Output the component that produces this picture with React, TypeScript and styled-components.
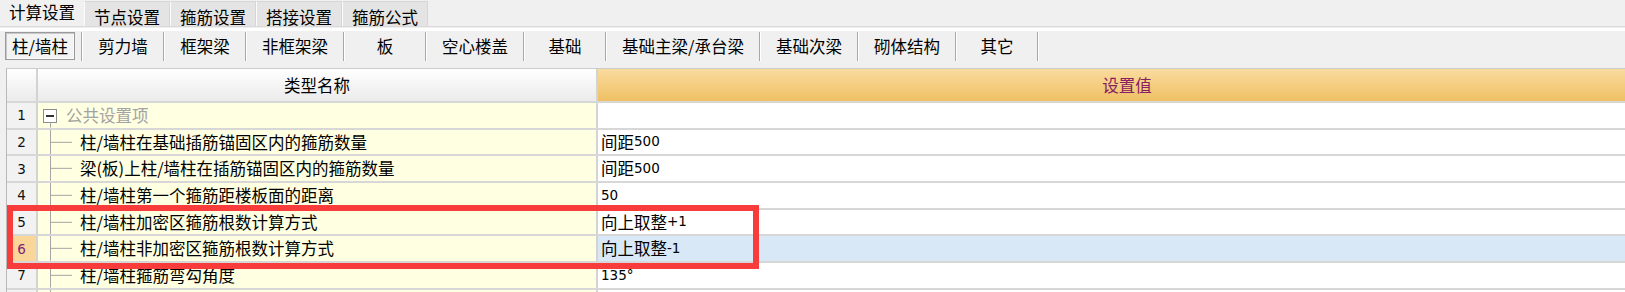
import React from 'react'
import styled, { createGlobalStyle } from 'styled-components'

const GlobalStyle = createGlobalStyle`
  html, body {
    margin: 0;
    padding: 0;
    background: #f0f0f0;
    overflow: hidden;
  }
  body {
    font-family: "Noto Sans CJK SC", sans-serif;
    color: #000;
  }
`

const CJK = `"Noto Sans CJK SC", sans-serif`
const LATIN = `"DejaVu Sans", "Noto Sans CJK SC", sans-serif`
const ROW_H = 26.667

const Page = styled.div`
  width: 1625px;
  height: 292px;
  overflow: hidden;
  background: #f0f0f0;
`

const TabStrip = styled.div`
  display: flex;
  align-items: flex-start;
  height: 26px;
  border-bottom: 1px solid #d9d9d9;
`

const TopTab = styled.div<{ $active?: boolean }>`
  box-sizing: border-box;
  display: flex;
  align-items: center;
  justify-content: center;
  font-family: ${CJK};
  font-size: 16.5px;
  line-height: 1;
  white-space: nowrap;
  padding: 0 9px;
  ${({ $active }) =>
    $active
      ? `
    height: 26px;
    padding-bottom: 1px;
    background: #f0f0f0;
  `
      : `
    height: 25px;
    margin-top: 1px;
    padding-top: 6px;
    background: #e4e4e4;
    border: 1px solid #d6d6d6;
    border-left-color: #fbfbfb;
    border-bottom: none;
  `}
`

const SubTabBar = styled.div`
  display: flex;
  align-items: stretch;
  margin-top: 1px;
  border-top: 3px solid #ffffff;
  padding-top: 1px;
  height: 29px;
`

const SubTab = styled.div<{ $active?: boolean }>`
  box-sizing: border-box;
  display: flex;
  align-items: center;
  justify-content: center;
  font-family: ${CJK};
  font-size: 16.5px;
  line-height: 1;
  white-space: nowrap;
  ${({ $active }) =>
    $active
      ? `
    margin: 0 6px 1px 5px;
    padding: 0 6px;
    border: 1px solid #9a9a9a;
    box-shadow: inset 1px 1px 0 #c9c9c9, inset -1px -1px 0 #fafafa;
    background: #f3f3f3;
  `
      : `
    min-width: 80px;
    padding: 0 15px;
  `}
`

const SubSep = styled.div`
  width: 1px;
  background: #a8a8a8;
  border-right: 1px solid #ffffff;
`

const TableWrap = styled.div`
  position: relative;
  margin: 7px 0 0 6px;
  width: 1649px;
  border-top: 1px solid #cbcbcb;
  border-left: 1px solid #b9b9b9;
`

const Row = styled.div<{ $header?: boolean }>`
  box-sizing: border-box;
  display: flex;
  height: ${({ $header }) => ($header ? '34px' : `${ROW_H}px`)};
  border-bottom: 2px solid #d7d7d7;
`

const NumCell = styled.div<{ $header?: boolean; $selected?: boolean }>`
  box-sizing: border-box;
  flex: 0 0 31px;
  display: flex;
  align-items: center;
  justify-content: center;
  border-right: 2px solid #d3d3d3;
  font-family: ${LATIN};
  font-size: 13.5px;
  color: ${({ $selected }) => ($selected ? '#7d237a' : '#111')};
  background: ${({ $header, $selected }) =>
    $header
      ? 'linear-gradient(#ffffff, #ebebeb)'
      : $selected
        ? '#fbd699'
        : '#f2f2f2'};
`

const NameCell = styled.div<{ $header?: boolean }>`
  box-sizing: border-box;
  flex: 0 0 560px;
  display: flex;
  align-items: center;
  justify-content: ${({ $header }) => ($header ? 'center' : 'flex-start')};
  border-right: 2px solid #d3d3d3;
  font-family: ${CJK};
  font-size: 16.5px;
  line-height: 1;
  white-space: nowrap;
  overflow: hidden;
  background: ${({ $header }) => ($header ? 'linear-gradient(#ffffff, #ebebeb)' : '#ffffe2')};
`

const NameText = styled.span<{ $muted?: boolean }>`
  color: ${({ $muted }) => ($muted ? '#a3a3a3' : '#000')};
`

const ValueCell = styled.div<{ $header?: boolean; $selected?: boolean }>`
  box-sizing: border-box;
  flex: 0 0 1058px;
  display: flex;
  align-items: center;
  justify-content: ${({ $header }) => ($header ? 'center' : 'flex-start')};
  padding-left: ${({ $header }) => ($header ? '0' : '3px')};
  font-family: ${CJK};
  font-size: 16.5px;
  line-height: 1;
  white-space: nowrap;
  color: ${({ $header }) => ($header ? '#862063' : '#000')};
  background: ${({ $header, $selected }) =>
    $header ? 'linear-gradient(#fadb9f, #efc063)' : $selected ? '#d9e8f6' : '#ffffff'};
`

const Latin = styled.span`
  font-family: ${LATIN};
  font-size: 13.5px;
`

const Gutter = styled.svg`
  flex: 0 0 auto;
  height: 100%;
  display: block;
`

const Highlight = styled.div`
  position: absolute;
  left: 0;
  top: 136px;
  width: 752px;
  height: 64px;
  box-sizing: border-box;
  border: 6px solid #f83c3c;
  pointer-events: none;
`

const LINE = '#a5a5a5'

const TreeRoot = () => (
  <Gutter width={28}>
    <rect x={5.5} y={6.5} width={13} height={13} fill="#ffffff" stroke="#8e8e8e" />
    <line x1={8} y1={13} x2={16} y2={13} stroke="#000" strokeWidth={1.6} />
    <line x1={12.5} y1={19.5} x2={12.5} y2="100%" stroke={LINE} />
  </Gutter>
)

const TreeLeaf = () => (
  <Gutter width={42}>
    <line x1={12.5} y1={0} x2={12.5} y2="100%" stroke={LINE} />
    <line x1={12.5} y1="50%" x2={34} y2="50%" stroke={LINE} />
  </Gutter>
)

// digits and signs come out in the smaller latin face
const mixed = (text: string) =>
  text
    .split(/([\u4e00-\u9fff]+)/)
    .filter(Boolean)
    .map((part, i) => (/[\u4e00-\u9fff]/.test(part) ? <span key={i}>{part}</span> : <Latin key={i}>{part}</Latin>))

const topTabs = ['计算设置', '节点设置', '箍筋设置', '搭接设置', '箍筋公式']
const subTabs = ['柱/墙柱', '剪力墙', '框架梁', '非框架梁', '板', '空心楼盖', '基础', '基础主梁/承台梁', '基础次梁', '砌体结构', '其它']

type Item = { name: string; value: string; root?: boolean; selected?: boolean }

const rows: Item[] = [
  { name: '公共设置项', value: '', root: true },
  { name: '柱/墙柱在基础插筋锚固区内的箍筋数量', value: '间距500' },
  { name: '梁(板)上柱/墙柱在插筋锚固区内的箍筋数量', value: '间距500' },
  { name: '柱/墙柱第一个箍筋距楼板面的距离', value: '50' },
  { name: '柱/墙柱加密区箍筋根数计算方式', value: '向上取整+1' },
  { name: '柱/墙柱非加密区箍筋根数计算方式', value: '向上取整-1', selected: true },
  { name: '柱/墙柱箍筋弯勾角度', value: '135°' },
]

export default function App() {
  return (
    <Page>
      <GlobalStyle />
      <TabStrip>
        {topTabs.map((t, i) => (
          <TopTab key={t} $active={i === 0}>
            {t}
          </TopTab>
        ))}
      </TabStrip>

      <SubTabBar>
        {subTabs.map((t, i) => (
          <React.Fragment key={t}>
            <SubTab $active={i === 0}>{t}</SubTab>
            <SubSep />
          </React.Fragment>
        ))}
      </SubTabBar>

      <TableWrap>
        <Row $header>
          <NumCell $header />
          <NameCell $header>类型名称</NameCell>
          <ValueCell $header>设置值</ValueCell>
        </Row>
        {rows.map((r, i) => (
          <Row key={i}>
            <NumCell $selected={r.selected}>{i + 1}</NumCell>
            <NameCell>
              {r.root ? <TreeRoot /> : <TreeLeaf />}
              <NameText $muted={r.root}>{r.name}</NameText>
            </NameCell>
            <ValueCell $selected={r.selected}>{mixed(r.value)}</ValueCell>
          </Row>
        ))}
        {/* next row, only its top edge is in view */}
        <Row>
          <NumCell />
          <NameCell>
            <TreeLeaf />
          </NameCell>
          <ValueCell />
        </Row>
        <Highlight />
      </TableWrap>
    </Page>
  )
}
